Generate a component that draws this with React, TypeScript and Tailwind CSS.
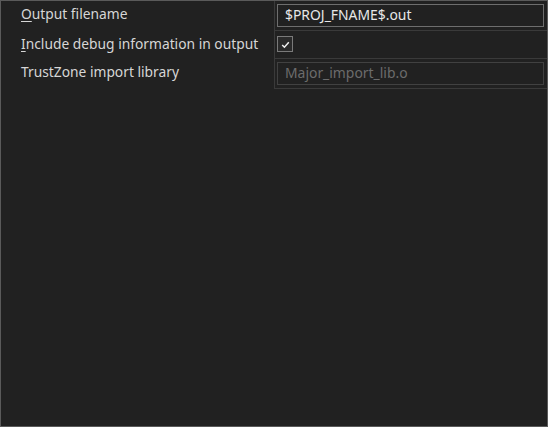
import React from 'react';

const font = { fontFamily: '"Noto Sans", "Open Sans", sans-serif' };

const Label = ({ text, accel }: { text: string; accel?: boolean }) => (
  <div className="pl-5 pt-[4px] text-[13.8px] leading-[18px] text-[#d6d6d6]">
    {accel ? (
      <>
        <span className="underline underline-offset-2">{text[0]}</span>
        {text.slice(1)}
      </>
    ) : (
      text
    )}
  </div>
);

export default function App() {
  return (
    <div
      className="w-[548px] h-[427px] bg-[#212121] border border-[#5a5a5a] select-none"
      style={font}
    >
      <div className="grid grid-cols-[273px_1fr]">
        {/* Output filename */}
        <Label text="Output filename" accel />
        <div className="h-[30px] border-l border-b border-[#3a3a3a] pl-[2px] pr-[3px] pt-[3px]">
          <div className="h-[23px] border border-[#6e6e6e] px-[7px] text-[13.9px] leading-[20px] text-[#e8e8e8]">
            $PROJ_FNAME$.out
          </div>
        </div>

        {/* Include debug information */}
        <Label text="Include debug information in output" accel />
        <div className="h-[28px] border-l border-b border-[#3a3a3a] pl-[2px] pt-[5px]">
          <div className="w-4 h-4 border border-[#7a7a7a] bg-[#2a2a2a] flex items-center justify-center">
            <svg width="11" height="11" viewBox="0 0 11 11">
              <path d="M2.2 6 L4.4 8.2 L8.8 3.2" fill="none" stroke="#f0f0f0" strokeWidth="1.5" />
            </svg>
          </div>
        </div>

        {/* TrustZone import library */}
        <Label text="TrustZone import library" />
        <div className="h-[30px] border-l border-b border-[#3a3a3a] pl-[2px] pr-[3px] pt-[3px]">
          <div className="h-[23px] border border-[#414141] px-[7px] text-[13.9px] leading-[20px] text-[#6c6c6c]">
            Major_import_lib.o
          </div>
        </div>
      </div>
    </div>
  );
}
